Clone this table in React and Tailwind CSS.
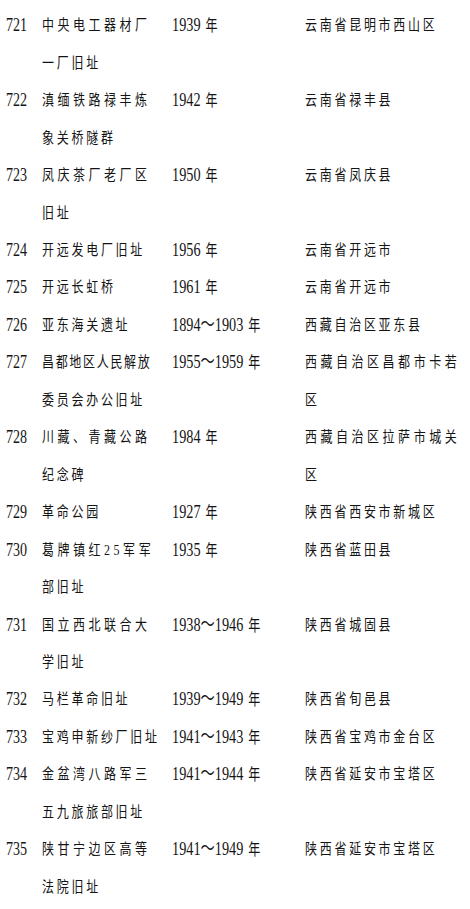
import React from "react";

const rows = [
  ["721", ["中央电工器材厂", "一厂旧址"], ["1939", "年"], ["云南省昆明市西山区"]],
  ["722", ["滇缅铁路禄丰炼", "象关桥隧群"], ["1942", "年"], ["云南省禄丰县"]],
  ["723", ["凤庆茶厂老厂区", "旧址"], ["1950", "年"], ["云南省凤庆县"]],
  ["724", ["开远发电厂旧址"], ["1956", "年"], ["云南省开远市"]],
  ["725", ["开远长虹桥"], ["1961", "年"], ["云南省开远市"]],
  ["726", ["亚东海关遗址"], ["1894～1903", "年"], ["西藏自治区亚东县"]],
  ["727", ["昌都地区人民解放", "委员会办公旧址"], ["1955～1959", "年"], ["西藏自治区昌都市卡若", "区"]],
  ["728", ["川藏、青藏公路", "纪念碑"], ["1984", "年"], ["西藏自治区拉萨市城关", "区"]],
  ["729", ["革命公园"], ["1927", "年"], ["陕西省西安市新城区"]],
  ["730", ["葛牌镇红25军军", "部旧址"], ["1935", "年"], ["陕西省蓝田县"]],
  ["731", ["国立西北联合大", "学旧址"], ["1938～1946", "年"], ["陕西省城固县"]],
  ["732", ["马栏革命旧址"], ["1939～1949", "年"], ["陕西省旬邑县"]],
  ["733", ["宝鸡申新纱厂旧址"], ["1941～1943", "年"], ["陕西省宝鸡市金台区"]],
  ["734", ["金盆湾八路军三", "五九旅旅部旧址"], ["1941～1944", "年"], ["陕西省延安市宝塔区"]],
  ["735", ["陕甘宁边区高等", "法院旧址"], ["1941～1949", "年"], ["陕西省延安市宝塔区"]],
];

const font = {
  fontFamily: '"Liberation Serif", "Noto Sans CJK SC", serif',
};

function Line({ children }) {
  return (
    <div className="h-[37.46px] leading-[37.46px] whitespace-nowrap">{children}</div>
  );
}

function CjkText({ text, mode }) {
  const cls =
    mode === "wide"
      ? "inline-block origin-left scale-x-[0.8] text-[15px] tracking-[4.4px]"
      : mode === "tight"
      ? "inline-block origin-left scale-x-[0.8] text-[15px] tracking-[2.1px]"
      : "inline-block origin-left scale-x-[0.8] text-[15px] tracking-[3.4px]";
  return <span className={cls}>{text}</span>;
}

function nameMode(lines, i) {
  if (lines.length > 1 && i === 0) {
    const cjkCount = lines[0].replace(/[0-9]/g, "").length;
    return cjkCount >= 8 ? "tight" : "wide";
  }
  return "normal";
}

export default function App() {
  return (
    <div className="w-[470px] h-[909px] bg-white text-[#141414] pt-[6.27px] overflow-hidden" style={font}>
      {rows.map(([num, names, year, locs]) => (
        <div key={num} className="grid grid-cols-[36px_130px_133px_1fr] pl-[6px]">
          <div>
            <Line>
              <span className="inline-block origin-left scale-x-[0.74] text-[19px]">{num}</span>
            </Line>
          </div>
          <div>
            {names.map((n, i) => (
              <Line key={n}>
                <CjkText text={n} mode={nameMode(names, i)} />
              </Line>
            ))}
          </div>
          <div>
            <Line>
              <span className="inline-block origin-left scale-x-[0.75] text-[19px]">
                {year[0]} <span className="ml-[2px] text-[16px]">{year[1]}</span>
              </span>
            </Line>
          </div>
          <div>
            {locs.map((l, i) => (
              <Line key={l}>
                <CjkText text={l} mode={locs.length > 1 && i === 0 ? "wide" : "normal"} />
              </Line>
            ))}
          </div>
        </div>
      ))}
    </div>
  );
}
